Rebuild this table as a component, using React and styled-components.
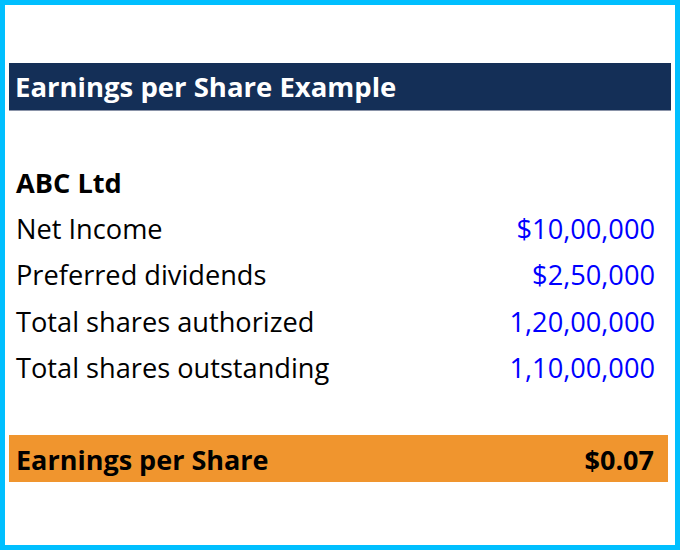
import React from 'react'
import styled, { createGlobalStyle } from 'styled-components'

const GlobalStyle = createGlobalStyle`
    body {
        margin: 0;
        font-family: "Open Sans", "Noto Sans", sans-serif;
    }
`

const Frame = styled.div`
    width: 680px;
    height: 550px;
    box-sizing: border-box;
    border: 5px solid #00bfff;
    background: #fff;
    padding: 58px 4px 0 4px;
`

const Title = styled.div`
    height: 48px;
    background: #142f57;
    border-bottom: 1px solid #8a93a8;
    box-sizing: border-box;
    display: flex;
    align-items: center;
    padding-left: 6px;
    color: #fff;
    font-size: 27.5px;
    font-weight: 700;
`

const Table = styled.div`
    margin-top: 48px;
    padding: 0 16px 0 7px;
`

const Row = styled.div`
    height: 46.3px;
    display: flex;
    align-items: center;
    justify-content: space-between;
    font-size: 27.2px;
    color: #000;
    font-weight: ${p => (p.bold ? 700 : 400)};
`

const Value = styled.span`
    color: #0000ff;
`

const Total = styled.div`
    margin-top: 45px;
    margin-right: 3px;
    height: 47px;
    background: #f0952e;
    display: flex;
    align-items: center;
    justify-content: space-between;
    padding: 1px 14px 0 7px;
    box-sizing: border-box;
    font-size: 27px;
    font-weight: 700;
    color: #000;
`

const rows = [
    ['Net Income', '$10,00,000'],
    ['Preferred dividends', '$2,50,000'],
    ['Total shares authorized', '1,20,00,000'],
    ['Total shares outstanding', '1,10,00,000'],
]

const App = () => {
    return (
        <>
            <GlobalStyle />
            <Frame>
                <Title>Earnings per Share Example</Title>
                <Table>
                    <Row bold>ABC Ltd</Row>
                    {rows.map(([label, value]) => (
                        <Row key={label}>
                            <span>{label}</span>
                            <Value>{value}</Value>
                        </Row>
                    ))}
                </Table>
                <Total>
                    <span>Earnings per Share</span>
                    <span>$0.07</span>
                </Total>
            </Frame>
        </>
    )
}

export default App
